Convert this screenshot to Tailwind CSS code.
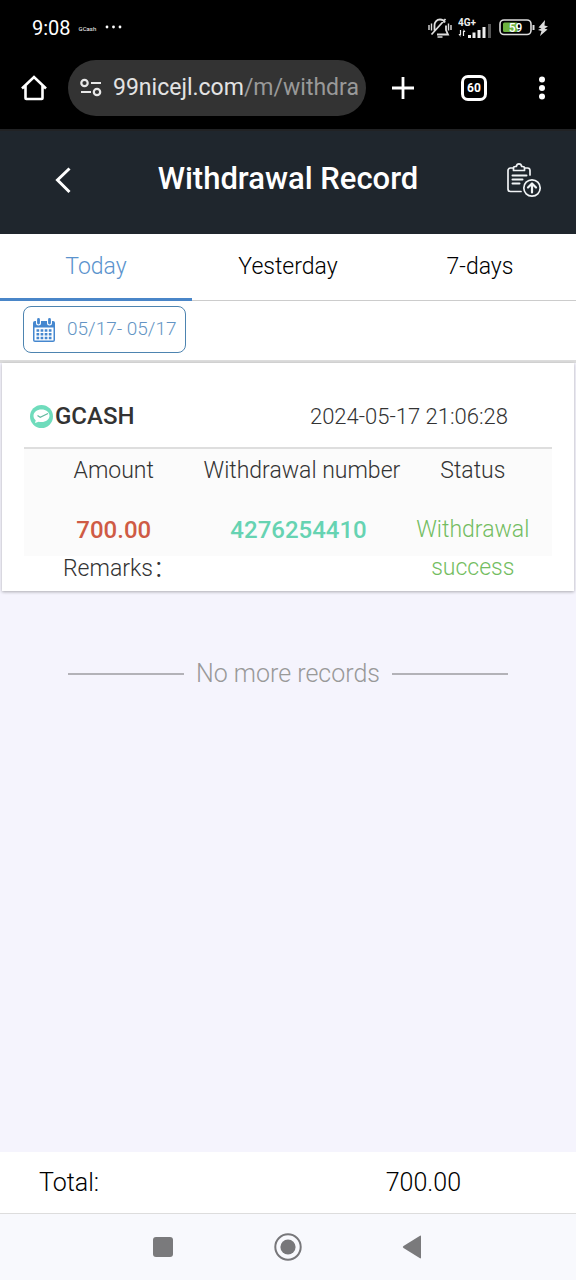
<!DOCTYPE html>
<html lang="en">
<head>
<meta charset="utf-8">
<meta name="viewport" content="width=device-width, initial-scale=1">
<title>Withdrawal Record</title>
<script src="https://cdn.jsdelivr.net/npm/@tailwindcss/browser@4"></script>
</head>
<body class="flex min-h-screen flex-col bg-[#f5f4fd] font-['Roboto','Noto_Sans_CJK_SC',sans-serif] font-light text-[#333]">
  <!-- Phone status bar and browser bar -->
  <div class="flex h-[129px] flex-col bg-black text-white">
    <div class="flex h-14 items-center pr-7 pl-8">
      <span class="text-[20px] font-normal">9:08</span>
      <span class="ml-2 text-[6px] font-normal">GCash</span>
      <svg class="ml-2 h-3 w-5" viewBox="0 0 20 12" fill="#fff"><circle cx="3" cy="5" r="1.400"/><circle cx="9.500" cy="5" r="1.400"/><circle cx="16" cy="5" r="1.400"/></svg>
      <svg class="ml-auto h-6 w-6" viewBox="0 0 24 24" fill="none" stroke="#ddd" stroke-width="1.800">
        <path d="M6.500 14.500V9.500A5.500 5.500 0 0 1 12 3.500c2.500 0 4.200 1.300 5 3M18 9.500V14l2 4.500H9M3.500 18.500 17.500 3"/>
        <path d="M9.500 21h5M1 9v5M3.500 7.500v7M20.500 7.500v7M23 9v5" stroke-width="1.400"/>
      </svg>
      <svg class="ml-1.5 h-6 w-[35px]" viewBox="0 0 35 24">
        <text x="0" y="10" font-size="10" font-weight="700" fill="#eee">4G+</text>
        <path d="M2.500 14v5M5.500 20v-5" stroke="#eee" stroke-width="1.200"/><path d="M.5 18h2v3zM7.500 16h-2v-3z" fill="#eee"/>
        <path d="M10 19h3v3h-3zM14.500 16.500h3V22h-3zM19.500 14h3v8h-3zM24.500 11h3v11h-3z" fill="#eee"/><path d="M30 8h3v14h-3z" fill="#555"/>
      </svg>
      <svg class="ml-1.5 h-6 w-[37px]" viewBox="0 0 37 24">
        <rect x="1" y="4" width="31" height="14.500" rx="4" fill="none" stroke="#ddd" stroke-width="1.600"/>
        <rect x="4" y="6.500" width="15" height="9.500" rx="1.500" fill="#6db33f"/>
        <path d="M34.500 9v5" stroke="#ddd" stroke-width="2"/>
        <text x="16.500" y="15.500" font-size="12" font-weight="500" text-anchor="middle" fill="#fff">59</text>
      </svg>
      <svg class="ml-0.5 h-4 w-2.5" viewBox="0 0 10 16" fill="#ddd"><path d="M7 0 .5 7.500l3 .8L0 10l3.500 1L2 16l7.500-6.500-3-1L10 6.500 6.500 5.500z"/></svg>
    </div>
    <div class="flex h-16 items-center pr-[22px] pl-5">
      <button aria-label="Home"><svg class="size-7" viewBox="0 0 28 28" fill="none" stroke="#fff" stroke-width="2.600"><path d="M2 14.500 14 3l12 11.500M5.500 12v12.200c0 .5.300.8.800.8h15.400c.5 0 .8-.3.800-.8V12"/></svg></button>
      <label class="ml-5 flex h-14 min-w-0 flex-1 items-center rounded-full bg-[#333] pr-2 pl-3">
        <svg class="h-5 w-[22px] shrink-0" viewBox="0 0 22 20" fill="none" stroke="#e8e8e8" stroke-width="2.200"><circle cx="4.500" cy="5" r="3.200"/><path d="M11 5h10M1 14h10"/><circle cx="17" cy="14" r="3.200"/></svg>
        <span class="ml-[11px] text-[23px] font-normal whitespace-nowrap text-[#e3e3e3]">99nicejl.com<span class="text-[#999]">/m/withdra</span></span>
      </label>
      <button class="ml-[25px]" aria-label="New tab"><svg class="size-6" viewBox="0 0 24 24" stroke="#fff" stroke-width="2.800"><path d="M12 1v22M1 12h22"/></svg></button>
      <button class="ml-[46px] flex size-[26px] items-center justify-center rounded-[7px] border-[3px] border-white text-[12px] font-bold" aria-label="60 open tabs">60</button>
      <button class="ml-[43px]" aria-label="Menu"><svg class="h-6 w-6" viewBox="0 0 24 24" fill="#fff"><circle cx="12" cy="3.500" r="3"/><circle cx="12" cy="12" r="3"/><circle cx="12" cy="20.500" r="3"/></svg></button>
    </div>
  </div>

  <header class="grid h-[105px] grid-cols-[1fr_auto_1fr] items-center border-t-2 border-[#212224] bg-[#1f262d] px-[34px] pb-1.5 text-white">
    <a href="#" class="ml-3.5 justify-self-start" aria-label="Back"><svg class="size-7" viewBox="0 0 28 28" fill="none" stroke="#fff" stroke-width="3"><path d="M21.500 2.500 9.500 14l12 12"/></svg></a>
    <h1 class="text-[31px] font-medium">Withdrawal Record</h1>
    <button class="justify-self-end" aria-label="Submitted records">
      <svg class="size-9" viewBox="0 0 36 36" fill="none" stroke="#f0f3f5" stroke-width="1.700" stroke-linecap="round" stroke-linejoin="round">
        <path d="M7 6H4.500A2.500 2.500 0 0 0 2 8.500V27a2.500 2.500 0 0 0 2.500 2.500H15M19 6h2.500A2.500 2.500 0 0 1 24 8.500V13"/>
        <path d="M7.500 8.500V6c0-1 .8-1.500 2-1.500h.8c.3-1.800 1.200-2.700 2.700-2.700s2.400.9 2.700 2.700h.8c1.200 0 2 .5 2 1.500v2.500z"/>
        <path d="M6.500 13.500h14M6.500 17.500h10M6.500 21.500h7" stroke-width="2"/>
        <circle cx="26" cy="26" r="8.200"/><path d="M26 30.500v-8.500M22 25.500l4-4 4 4" stroke-width="2.200"/>
      </svg>
    </button>
  </header>

  <nav class="grid h-[67px] grid-cols-3 border-b border-[#ccc] bg-white text-center text-[23px] text-black">
    <a href="#" class="-mb-px border-b-[3px] border-[#4a86c8] pt-4 text-[#5b93cd]" aria-current="page">Today</a>
    <a href="#" class="pt-4">Yesterday</a>
    <a href="#" class="pt-4">7-days</a>
  </nav>

  <div class="flex h-[59px] items-start bg-white px-[23px] pt-[5px]">
    <button class="flex h-[47px] items-center gap-3 rounded-lg border border-[#4d84b0] pr-2 pl-[9px] text-[19px] text-[#6394c4]">
      <svg class="h-6 w-[22px]" viewBox="0 0 22 24"><path fill="#4587cf" d="M2 3h18a2 2 0 0 1 2 2v17a2 2 0 0 1-2 2H2a2 2 0 0 1-2-2V5a2 2 0 0 1 2-2z"/><path d="M1.500 9.500h19V22.500h-19z" fill="#fff"/><path d="M5.500 1v4M16.500 1v4" stroke="#fff" stroke-width="5" stroke-linecap="round"/><path d="M5.500 1.500V5M16.500 1.500V5" stroke="#4587cf" stroke-width="2.800" stroke-linecap="round"/><path d="M3.500 12.500h15M3.500 16.200h15M3.500 20h15" stroke="#4587cf" stroke-width="2.400" stroke-dasharray="2.700 1.400"/></svg>
      <span>05/17- 05/17</span>
    </button>
  </div>

  <main class="flex-1 border-t-[3px] border-[#dcdcdc]">
    <article class="mx-0.5 bg-white px-[22px] shadow-[0_1px_3px_rgba(0,0,0,0.3)]">
      <div class="flex h-[86px] items-center justify-between border-b-2 border-[#dedede] pt-[22px] pr-11 pl-1.5">
        <h2 class="flex items-center gap-0.5 text-[24px] font-medium">
          <svg class="size-[23px]" viewBox="0 0 23 23"><circle cx="11.500" cy="11.500" r="11.500" fill="#6fdcbc"/><path d="M11.500 4.500c4.500 0 8 2.700 8 6.300s-3.500 6.300-8 6.300c-1 0-2-.1-2.800-.4L5 18l.7-2.800C4.200 14 3.500 12.500 3.500 10.800c0-3.600 3.500-6.300 8-6.300z" fill="#fff"/><path d="m7.500 10.500 2.700 1.800L18 8.500" fill="none" stroke="#62b9a0" stroke-width="1.200"/></svg>
          GCASH
        </h2>
        <time class="text-[22px]" datetime="2024-05-17T21:06:28">2024-05-17 21:06:28</time>
      </div>
      <table class="w-full table-fixed text-center text-[23px]">
        <colgroup><col class="w-[34%]"><col class="w-[36%]"><col class="w-[30%]"></colgroup>
        <thead>
          <tr class="h-11 bg-[#fbfbfb]"><th class="p-0 font-light" scope="col">Amount</th><th class="p-0 font-light whitespace-nowrap" scope="col">Withdrawal number</th><th class="p-0 font-light" scope="col">Status</th></tr>
        </thead>
        <tbody class="align-top leading-[38px]">
          <tr class="h-[63px]">
            <td class="bg-[#fbfbfb] pt-[18px] text-[24px] font-medium text-[#cf5b45]">700.00</td>
            <td class="bg-[#fbfbfb] pt-[18px] text-[24px] font-medium text-[#66d3b2]">4276254410</td>
            <td class="bg-[linear-gradient(#fbfbfb_63px,#fff_63px)] pt-[18px] text-[#73bd61]" rowspan="2">Withdrawal success</td>
          </tr>
          <tr class="h-[35px]"><td class="p-0 leading-[26px]" colspan="2"><div class="pl-[39px] text-left">Remarks：</div></td></tr>
        </tbody>
      </table>
    </article>
    <p class="mx-[68px] mt-16 flex items-center gap-3 text-[25px] whitespace-nowrap text-[#999] before:h-0.5 before:flex-1 before:bg-[#b3b2b8] after:h-0.5 after:flex-1 after:bg-[#b3b2b8]">No more records</p>
  </main>

  <footer>
    <dl class="flex h-[62px] items-center border-b border-[#ddd] bg-white text-[25px] text-black">
      <dt class="w-1/2 pl-[39px]">Total:</dt><dd class="w-[47%] text-center">700.00</dd>
    </dl>
    <div class="flex h-[66px] items-center justify-center gap-[97px] bg-[#f8f9fd]">
      <button aria-label="Recent apps"><svg class="size-7" viewBox="0 0 28 28"><rect x="4" y="4" width="20" height="20" rx="3" fill="#7a7a7c"/></svg></button>
      <button aria-label="Home screen"><svg class="size-7" viewBox="0 0 28 28"><circle cx="14" cy="14" r="12.700" fill="none" stroke="#77777a" stroke-width="2"/><circle cx="14" cy="14" r="7.600" fill="#77777a"/></svg></button>
      <button aria-label="Previous screen"><svg class="size-7" viewBox="0 0 28 28"><path d="M4.500 13 21 2.700c.5-.3 1 0 1 .6v21.400c0 .6-.5.9-1 .6L4.500 15a1.200 1.200 0 0 1 0-2z" fill="#7a7a7c"/></svg></button>
    </div>
  </footer>
</body>
</html>
